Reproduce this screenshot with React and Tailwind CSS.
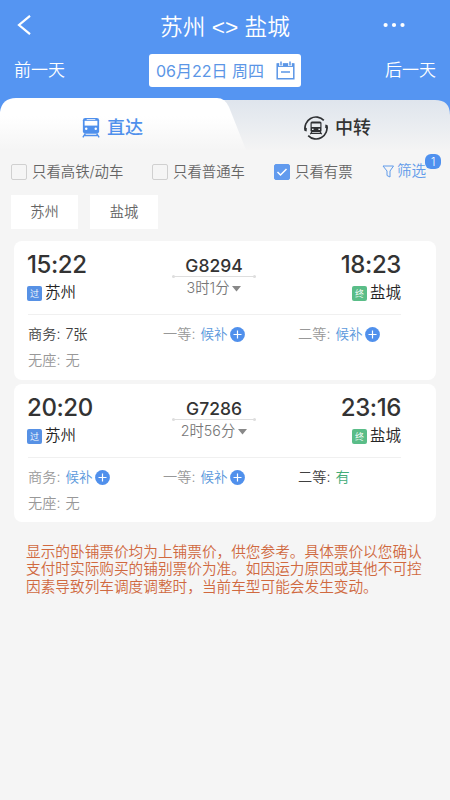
import React from "react";

function Train({ className }) {
  return (
    <svg className={className} viewBox="0 0 20 22" fill="none">
      <rect x="1.500" y="1" width="17" height="16.500" rx="2.500" fill="currentColor" />
      <rect x="3.300" y="4" width="13.400" height="5" fill="#fff" />
      <rect x="5.500" y="2.200" width="9" height=".8" fill="#fff" />
      <circle cx="5" cy="12.300" r="1.300" fill="#fff" />
      <circle cx="15" cy="12.300" r="1.300" fill="#fff" />
      <path stroke="currentColor" strokeWidth="1.500" d="M4 17.300 1.500 21.300M16 17.300l2.500 4M3.500 19.300h13" />
    </svg>
  );
}

function TransferTrain() {
  return (
    <svg className="h-6 w-6 text-[#2f3134]" viewBox="0 0 24 24" fill="none">
      <path stroke="currentColor" strokeWidth="1.700" d="M1.400 14.800A10.900 10.900 0 0 1 19.800 4.400M22.600 9.200A10.900 10.900 0 0 1 4.200 19.600" />
      <path fill="currentColor" d="M0 11.500 2.800 12 2.600 15.500 1 15ZM24 12.500 21.200 12l.2-3.500 1.600.5Z" />
      <rect x="6.500" y="5.500" width="11" height="10.500" rx="1.500" fill="currentColor" />
      <rect x="7.700" y="7.500" width="8.600" height="3.500" fill="#e9ecf0" />
      <rect x="8" y="12.700" width="1.600" height="1.300" fill="#e9ecf0" />
      <rect x="14.400" y="12.700" width="1.600" height="1.300" fill="#e9ecf0" />
      <path stroke="currentColor" strokeWidth="1.200" d="M8 15.500 6.300 18.300M16 15.500l1.700 2.800M7.500 17.400h9" />
    </svg>
  );
}

function Calendar() {
  return (
    <svg className="h-[19px] w-[19px]" viewBox="0 0 19 19" fill="none" stroke="#5b96e6">
      <path strokeWidth="1.500" d="M1.200 3h16.600v14.800H1.200Z" />
      <path strokeWidth="3.500" d="M1.200 4.200h16.600" />
      <path stroke="#fff" strokeWidth="3.600" d="M5 0v5M14 0v5" />
      <path strokeWidth="1.500" d="M5 .5v4M14 .5v4M5 11h9" />
    </svg>
  );
}

function Plus() {
  return (
    <svg className="ml-[3px] h-[15px] w-[15px] shrink-0" viewBox="0 0 15 15">
      <circle cx="7.500" cy="7.500" r="7.400" fill="#5090ec" />
      <path d="M3.500 7.500h8M7.500 3.500v8" stroke="#fff" strokeWidth="1.200" />
    </svg>
  );
}

function Check({ label, checked, className }) {
  return (
    <div className={`flex items-center ${className}`}>
      <span className={`flex h-4 w-4 items-center justify-center rounded-[2px] border ${checked ? "border-[#629bee] bg-[#629bee]" : "border-[#d0d0d0]"}`}>
        {checked && (
          <svg className="h-3 w-3 shrink-0" viewBox="0 0 12 12" fill="none" stroke="#fff" strokeWidth="1.500">
            <path d="m1.500 6 3 3 6-6" />
          </svg>
        )}
      </span>
      <span className="ml-[5px] text-[14.400px]">{label}</span>
    </div>
  );
}

function Seat({ label, value, tone, waitlist }) {
  return (
    <div className={`flex items-center ${tone === "dark" ? "text-[#404040]" : "text-[#989898]"}`}>
      <span className="-mt-px">{label}:</span>
      {waitlist ? (
        <>
          <span className="ml-[5px] text-[13.500px] text-[#5b98dc]">候补</span>
          <Plus />
        </>
      ) : (
        <span className={`-mt-px ml-[5px] ${value === "有" ? "text-[#42ac77]" : ""}`}>{value}</span>
      )}
    </div>
  );
}

function Station({ mark, name, color }) {
  return (
    <div className="mt-[4px] flex h-5 items-center">
      <span className={`flex h-[15px] w-[15px] items-center justify-center rounded-[2px] text-[9px] leading-none text-white ${color}`}>{mark}</span>
      <span className="ml-[3px] text-[15.500px] leading-5 text-[#242424]">{name}</span>
    </div>
  );
}

function Ticket({ depart, arrive, train, duration, seats, className }) {
  return (
    <section className={`mx-[14px] rounded-lg bg-white pl-[13px] ${className}`}>
      <div className="flex h-[73px] justify-between pr-[35px] pt-[10px]">
        <div className="w-[90px]">
          <div className="text-[24px] leading-[28px] tracking-[-0.400px] font-medium text-[#333]">{depart}</div>
          <Station mark="过" name="苏州" color="bg-[#5791e5]" />
        </div>
        <div className="flex w-[84px] flex-col items-center pt-[4px]">
          <div className="text-[17.500px] font-medium leading-[21px] text-[#333]">{train}</div>
          <div className="flex h-px w-full items-center justify-between bg-[#dedede]">
            <span className="h-[3px] w-[3px] rounded-full bg-[#dedede]" />
            <span className="h-[3px] w-[3px] rounded-full bg-[#dedede]" />
          </div>
          <div className="flex h-[21px] items-center whitespace-nowrap text-[14.300px] text-[#777]">
            {duration}
            <svg className="ml-[3px] mt-[3px] h-[6px] w-[9px]" viewBox="0 0 9 6"><path d="M0 0h9L4.500 5.500Z" fill="#888" /></svg>
          </div>
        </div>
        <div className="flex w-[90px] flex-col items-end">
          <div className="text-[24px] leading-[28px] tracking-[-0.400px] font-medium text-[#333]">{arrive}</div>
          <Station mark="终" name="盐城" color="bg-[#5abd88]" />
        </div>
      </div>
      <div className="ml-px mr-[35px] h-px bg-[#f0f0f0]" />
      <div className="ml-px grid grid-cols-[135px_135px_1fr] auto-rows-[26px] pt-[6px] text-[14.200px]">
        {seats.map((s) => <Seat key={s.label} {...s} />)}
      </div>
    </section>
  );
}

export default function App() {
  return (
    <main className="h-[800px] w-[450px] overflow-hidden bg-[#f5f5f5] font-[350] font-['Inter','Noto_Sans_CJK_SC',sans-serif] text-[#656565]">
      <header className="h-[98px] bg-[#5595f2] text-white">
        <div className="grid h-[54px] grid-cols-[100px_1fr_100px] items-center">
          <svg className="ml-[17px] mt-[-4px] h-5 w-[14px]" viewBox="0 0 14 20" fill="none" stroke="currentColor" strokeWidth="2.200"><path d="M13 .8 2 10l11 9.200" /></svg>
          <h1 className="whitespace-nowrap text-center text-[22.700px] leading-[30px] font-['Liberation_Sans','Noto_Sans_CJK_SC',sans-serif]">苏州 &lt;&gt; 盐城</h1>
          <svg className="ml-[33px] mt-[-4px] h-[6px] w-[22px]" viewBox="0 0 22 6" fill="currentColor"><circle cx="2.600" cy="3" r="2.100" /><circle cx="11" cy="3" r="2.100" /><circle cx="19.500" cy="3" r="2.100" /></svg>
        </div>
        <div className="flex h-[33px] items-center justify-between px-[14px] text-[17px]">
          <span className="mt-px w-[60px]">前一天</span>
          <div className="flex h-[33px] w-[152px] items-center justify-between rounded-[3px] bg-white pl-[7px] pr-[6px] text-[16px] font-normal text-[#5b96e6]">
            <span className="mt-px whitespace-nowrap">06月22日 周四</span>
            <Calendar />
          </div>
          <span className="mt-px w-[60px] text-right">后一天</span>
        </div>
      </header>

      <nav className="grid h-[52px] bg-[#5595f2]">
        <svg className="col-start-1 row-start-1 h-[52px] w-[450px]" viewBox="0 0 450 52">
          <defs>
            <linearGradient id="inactive" x1="0" y1="0" x2="0" y2="1"><stop stopColor="#dfe5ed" /><stop offset="1" stopColor="#f4f4f4" /></linearGradient>
            <linearGradient id="active" x1="0" y1="0" x2="0" y2="1"><stop offset=".35" stopColor="#fff" /><stop offset="1" stopColor="#f5f5f5" /></linearGradient>
          </defs>
          <path d="M200 2h235q15 0 15 15v35H200Z" fill="url(#inactive)" />
          <path d="M0 52V14Q2 0 16 0H217Q225 0 229 9L246 52Z" fill="url(#active)" />
        </svg>
        <div className="col-start-1 row-start-1 grid grid-cols-2 text-[18px] font-medium">
          <div className="flex items-center pl-[81px] pt-[7px] text-[#4f90ec]"><Train className="mr-[6px] h-[21px] w-[20px]" />直达</div>
          <div className="flex items-center pl-[79px] pt-[7px] text-[#333]"><TransferTrain /><span className="ml-[7px]">中转</span></div>
        </div>
      </nav>

      <div className="flex h-[44px] items-center pl-[11px]">
        <Check label="只看高铁/动车" className="w-[141px]" />
        <Check label="只看普通车" className="w-[122px]" />
        <Check label="只看有票" checked className="w-[108px]" />
        <div className="relative flex items-center text-[14.600px] text-[#619bea]">
          <svg className="mr-[2px] h-[13px] w-[13px]" viewBox="0 0 13 13" fill="none" stroke="currentColor"><path d="M1 1h10.500L8 6v6L5 10.500V6Z" /></svg>
          筛选
          <span className="absolute -right-[15px] -top-[7px] flex h-[15px] w-[16px] items-center justify-center rounded-[6px] bg-[#4f91ef] pt-px text-[11px] leading-none text-white">1</span>
        </div>
      </div>

      <div className="mt-px flex h-[46px] gap-3 pl-[11px]">
        <span className="flex h-[34px] w-[67px] items-center justify-center bg-white text-[14.300px]">苏州</span>
        <span className="flex h-[34px] w-[68px] items-center justify-center bg-white text-[14.300px]">盐城</span>
      </div>

      <Ticket className="h-[139px]" depart="15:22" arrive="18:23" train="G8294" duration="3时1分" seats={[
        { label: "商务", value: "7张", tone: "dark" },
        { label: "一等", waitlist: true },
        { label: "二等", waitlist: true },
        { label: "无座", value: "无" },
      ]} />
      <Ticket className="mt-[4px] h-[138px]" depart="20:20" arrive="23:16" train="G7286" duration="2时56分" seats={[
        { label: "商务", waitlist: true },
        { label: "一等", waitlist: true },
        { label: "二等", value: "有", tone: "dark" },
        { label: "无座", value: "无" },
      ]} />

      <p className="ml-[26px] mt-[22px] whitespace-nowrap text-[14.670px] leading-[17.300px] text-[#d0693f] font-['Liberation_Sans','Noto_Sans_CJK_SC',sans-serif]">
        显示的卧铺票价均为上铺票价，供您参考。具体票价以您确认<br />
        支付时实际购买的铺别票价为准。如因运力原因或其他不可控<br />
        因素导致列车调度调整时，当前车型可能会发生变动。
      </p>
    </main>
  );
}
